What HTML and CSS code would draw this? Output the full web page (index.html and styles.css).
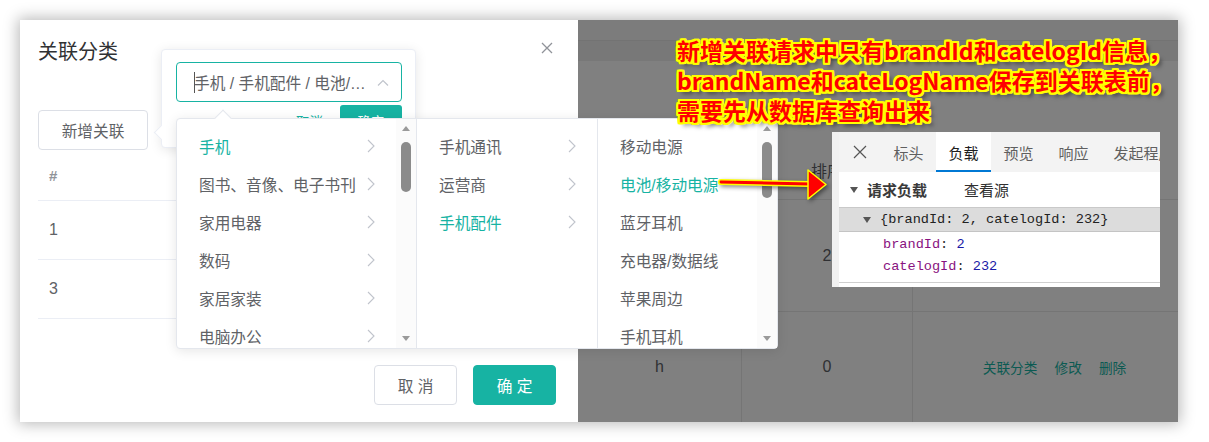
FILE: index.html
```html
<!DOCTYPE html>
<html lang="zh">
<head>
<meta charset="utf-8">
<title>关联分类</title>
<link rel="stylesheet" href="styles.css">
</head>
<body>
<div class="frame">
  <section class="dialog">
    <header class="dlg-head">
      <span class="dlg-title">关联分类</span>
      <svg class="dlg-close" viewBox="0 0 12 12" width="12" height="12"><path d="M1 1L11 11M11 1L1 11" stroke="#909399" stroke-width="1.3" fill="none"/></svg>
    </header>
    <div class="dlg-body">
      <button class="btn add-btn">新增关联</button>
      <div class="tbl">
        <div class="tr th">#</div>
        <div class="tr">1</div>
        <div class="tr">3</div>
      </div>
    </div>
    <footer class="dlg-foot">
      <button class="btn foot-btn">取 消</button>
      <button class="btn foot-btn btn-primary">确 定</button>
    </footer>
  </section>

  <section class="page">
    <div class="page-top"></div>
    <div class="page-sub"></div>
    <div class="ptable">
      <div class="prow phead">
        <div class="pc c1"></div><div class="pc c2">排序</div><div class="pc c3">操作</div>
      </div>
      <div class="prow p1">
        <div class="pc c1"></div><div class="pc c2">2</div><div class="pc c3"></div>
      </div>
      <div class="prow p2">
        <div class="pc c1">h</div><div class="pc c2">0</div>
        <div class="pc c3 links"><span>关联分类</span><span>修改</span><span>删除</span></div>
      </div>
    </div>
  </section>

  <div class="popover">
    <div class="cinput">
      <span class="caret"></span>
      <span class="cval">手机 / 手机配件 / 电池/…</span>
      <svg class="cup" viewBox="0 0 12 7" width="12" height="7"><path d="M1 6.5L6 1.5L11 6.5" stroke="#c0c4cc" stroke-width="1.2" fill="none"/></svg>
    </div>
    <div class="pop-actions">
      <span class="pop-cancel">取消</span>
      <span class="pop-ok">确定</span>
    </div>
  </div>

  <div class="cascader">
    <div class="menu m1">
      <div class="list">
        <div class="item active">手机<svg class="chev" viewBox="0 0 8 14"><path d="M1 1L7 7L1 13" stroke="#c0c4cc" stroke-width="1.1" fill="none"/></svg></div>
        <div class="item">图书、音像、电子书刊<svg class="chev" viewBox="0 0 8 14"><path d="M1 1L7 7L1 13" stroke="#c0c4cc" stroke-width="1.1" fill="none"/></svg></div>
        <div class="item">家用电器<svg class="chev" viewBox="0 0 8 14"><path d="M1 1L7 7L1 13" stroke="#c0c4cc" stroke-width="1.1" fill="none"/></svg></div>
        <div class="item">数码<svg class="chev" viewBox="0 0 8 14"><path d="M1 1L7 7L1 13" stroke="#c0c4cc" stroke-width="1.1" fill="none"/></svg></div>
        <div class="item">家居家装<svg class="chev" viewBox="0 0 8 14"><path d="M1 1L7 7L1 13" stroke="#c0c4cc" stroke-width="1.1" fill="none"/></svg></div>
        <div class="item">电脑办公<svg class="chev" viewBox="0 0 8 14"><path d="M1 1L7 7L1 13" stroke="#c0c4cc" stroke-width="1.1" fill="none"/></svg></div>
      </div>
      <div class="sbar"><span class="tri-up"></span><span class="thumb t1"></span><span class="tri-down"></span></div>
    </div>
    <div class="menu m2">
      <div class="list">
        <div class="item">手机通讯<svg class="chev" viewBox="0 0 8 14"><path d="M1 1L7 7L1 13" stroke="#c0c4cc" stroke-width="1.1" fill="none"/></svg></div>
        <div class="item">运营商<svg class="chev" viewBox="0 0 8 14"><path d="M1 1L7 7L1 13" stroke="#c0c4cc" stroke-width="1.1" fill="none"/></svg></div>
        <div class="item active">手机配件<svg class="chev" viewBox="0 0 8 14"><path d="M1 1L7 7L1 13" stroke="#c0c4cc" stroke-width="1.1" fill="none"/></svg></div>
      </div>
    </div>
    <div class="menu m3">
      <div class="list">
        <div class="item">移动电源</div>
        <div class="item active">电池/移动电源</div>
        <div class="item">蓝牙耳机</div>
        <div class="item">充电器/数据线</div>
        <div class="item">苹果周边</div>
        <div class="item">手机耳机</div>
      </div>
      <div class="sbar"><span class="tri-up"></span><span class="thumb t3"></span><span class="tri-down"></span></div>
    </div>
  </div>

  <div class="devtools">
    <div class="dt-body">
      <div class="dt-tabs">
        <svg class="dt-x" viewBox="0 0 14 14" width="14" height="14"><path d="M1 1L13 13M13 1L1 13" stroke="#555" stroke-width="1.2" fill="none"/></svg>
        <span class="dt-tab">标头</span>
        <span class="dt-tab on">负载</span>
        <span class="dt-tab">预览</span>
        <span class="dt-tab">响应</span>
        <span class="dt-tab">发起程序</span>
      </div>
      <div class="dt-sec"><span class="dt-tri"></span><b>请求负载</b><span class="dt-src">查看源</span></div>
      <div class="dt-obj"><span class="dt-tri"></span>{brandId: 2, catelogId: 232}</div>
      <div class="dt-kvs">
        <div class="dt-kv"><span class="k">brandId</span>: <span class="v">2</span></div>
        <div class="dt-kv"><span class="k">catelogId</span>: <span class="v">232</span></div>
      </div>
    </div>
  </div>

  <div class="note">
    <div>新增关联请求中只有brandId和catelogId信息，</div>
    <div>brandName和cateLogName保存到关联表前，</div>
    <div>需要先从数据库查询出来</div>
  </div>

  <svg class="arrow" viewBox="0 0 114 36" width="114" height="36">
    <path d="M3 14L92 16" stroke="#ffff00" stroke-width="6" stroke-linecap="round" fill="none"/>
    <path d="M3 14L92 16" stroke="#ff0000" stroke-width="3" stroke-linecap="round" fill="none"/>
    <path d="M90 2L108 16.5L90 31Z" fill="#ff0000" stroke="#ffff00" stroke-width="1.5" stroke-linejoin="round"/>
  </svg>
</div>
</body>
</html>
```

FILE: styles.css
```css
html, body {
  margin: 0;
  padding: 0;
  background: #fff;
}
body {
  font-family: "Liberation Sans", "Noto Sans CJK SC", sans-serif;
  color: #606266;
}
.frame {
  position: relative;
  width: 1158px;
  height: 402px;
  margin: 20px;
  display: flex;
  box-shadow: 0 0 14px 2px rgba(0, 0, 0, 0.28);
}

/* ---------- dialog ---------- */
.dialog {
  width: 558px;
  background: #fff;
  display: flex;
  flex-direction: column;
}
.dlg-head {
  display: flex;
  justify-content: space-between;
  align-items: flex-start;
  padding: 20px 25px 0 18px;
  height: 24px;
}
.dlg-title {
  font-size: 20px;
  line-height: 24px;
  color: #303133;
}
.dlg-close {
  margin-top: 2px;
}
.dlg-body {
  padding: 46px 18px 0;
}
.btn {
  font-family: "Liberation Sans", "Noto Sans CJK SC", sans-serif;
  font-size: 15.7px;
  color: #606266;
  background: #fff;
  border: 1px solid #dcdfe6;
  border-radius: 4px;
  padding: 0;
  box-sizing: border-box;
}
.add-btn {
  width: 110px;
  height: 40px;
  display: block;
}
.tbl {
  width: 100%;
}
.tr {
  height: 59px;
  box-sizing: border-box;
  border-bottom: 1px solid #ebeef5;
  display: flex;
  align-items: center;
  padding-left: 11px;
  font-size: 16px;
  color: #606266;
}
.tr.th {
  height: 51px;
  font-weight: bold;
  font-size: 15px;
  color: #909399;
}
.dlg-foot {
  margin-top: auto;
  display: flex;
  justify-content: flex-end;
  gap: 16px;
  padding: 0 22px 17px;
}
.foot-btn {
  width: 83px;
  height: 40px;
}
.btn-primary {
  background: #17b3a3;
  border-color: #17b3a3;
  color: #fff;
}

/* ---------- dimmed page behind ---------- */
.page {
  flex: 1;
  background: #808080;
  display: flex;
  flex-direction: column;
}
.page-top {
  height: 20px;
  background: #7c7c7c;
  border-bottom: 1px solid #737373;
}
.page-sub {
  height: 20px;
  background: #787878;
}
.ptable {
  margin-top: 79px;
  flex: 1;
  display: flex;
  flex-direction: column;
}
.prow {
  display: flex;
  border-bottom: 1px solid #757575;
  box-sizing: border-box;
}
.phead { height: 60px; }
.p1 { height: 112px; }
.p2 { flex: 1; border-bottom: none; }
.pc {
  display: flex;
  align-items: center;
  justify-content: center;
  border-right: 1px solid #757575;
  box-sizing: border-box;
  font-size: 16px;
  color: #2f3033;
}
.c1 { width: 164px; }
.c2 { width: 171px; }
.c3 { flex: 1; border-right: none; }
.links {
  gap: 17px;
  padding-left: 18px;
  font-size: 13.7px;
  color: #0c5a52;
}

/* ---------- popover ---------- */
.popover {
  position: absolute;
  left: 141px;
  top: 29px;
  width: 255px;
  height: 99px;
  box-sizing: border-box;
  background: #fff;
  border: 1px solid #ebeef5;
  border-radius: 4px;
  box-shadow: 0 2px 12px rgba(0, 0, 0, 0.1);
  padding: 12px 13px 0 14px;
}
.popover::before {
  content: "";
  position: absolute;
  left: -6px;
  top: 77px;
  width: 10px;
  height: 10px;
  background: #fff;
  border-left: 1px solid #ebeef5;
  border-bottom: 1px solid #ebeef5;
  transform: rotate(45deg);
}
.cinput {
  height: 40px;
  box-sizing: border-box;
  border: 1px solid #17b3a3;
  border-radius: 4px;
  display: flex;
  align-items: center;
  padding: 0 12px 0 17px;
}
.caret {
  width: 1px;
  height: 21px;
  background: #555;
  margin-right: -1px;
  flex: none;
}
.cval {
  flex: 1;
  font-size: 15.7px;
  color: #606266;
  white-space: nowrap;
  overflow: hidden;
}
.cup { flex: none; }
.pop-actions {
  display: flex;
  justify-content: flex-end;
  align-items: center;
  gap: 17px;
  margin-top: 3px;
}
.pop-cancel {
  font-size: 13.5px;
  color: #17b3a3;
}
.pop-ok {
  width: 62px;
  height: 32px;
  border-radius: 3px;
  background: #17b3a3;
  color: #fff;
  font-size: 13.5px;
  display: flex;
  align-items: center;
  justify-content: center;
}

/* ---------- cascader ---------- */
.cascader {
  position: absolute;
  left: 156px;
  top: 98px;
  width: 602px;
  height: 231px;
  box-sizing: border-box;
  background: #fff;
  border: 1px solid #e4e7ed;
  border-radius: 4px;
  box-shadow: 0 2px 12px rgba(0, 0, 0, 0.1);
  display: flex;
}
.cascader::before {
  content: "";
  position: absolute;
  left: 40px;
  top: -7px;
  width: 11px;
  height: 11px;
  background: #fff;
  border-left: 1px solid #e4e7ed;
  border-top: 1px solid #e4e7ed;
  transform: rotate(45deg);
}
.menu {
  display: flex;
  height: 100%;
  overflow: hidden;
  box-sizing: border-box;
  border-right: 1px solid #e4e7ed;
}
.m1 { width: 240px; }
.m2 { width: 181px; }
.m3 { flex: 1; border-right: none; }
.list {
  flex: 1;
  padding-top: 8px;
  min-width: 0;
}
.item {
  height: 38px;
  display: flex;
  align-items: center;
  padding: 0 21px 0 22px;
  font-size: 15.7px;
  color: #606266;
  white-space: nowrap;
}
.item.active { color: #17b3a3; }
.chev {
  margin-left: auto;
  width: 8px;
  height: 14px;
  flex: none;
}
.sbar {
  width: 20px;
  flex: none;
  background: #fbfbfb;
  display: flex;
  flex-direction: column;
  align-items: center;
  padding: 7px 0;
  box-sizing: border-box;
}
.tri-up {
  width: 0;
  height: 0;
  border-left: 4.5px solid transparent;
  border-right: 4.5px solid transparent;
  border-bottom: 5px solid #9a9a9a;
}
.tri-down {
  margin-top: auto;
  width: 0;
  height: 0;
  border-left: 4.5px solid transparent;
  border-right: 4.5px solid transparent;
  border-top: 5px solid #9a9a9a;
}
.thumb {
  width: 10px;
  border-radius: 5px;
  background: #8b8b8b;
  margin-top: 11px;
}
.t1 { height: 50px; }
.t3 { height: 56px; }

/* ---------- devtools snippet ---------- */
.devtools {
  position: absolute;
  left: 812px;
  top: 112px;
  width: 328px;
  height: 155px;
  box-sizing: border-box;
  padding-left: 7px;
  background: #f1f1f1;
  font-family: "Noto Sans CJK SC", sans-serif;
  color: #303030;
}
.dt-body {
  height: 100%;
  background: #fff;
  overflow: hidden;
}
.dt-tabs {
  height: 40px;
  background: #f3f3f3;
  display: flex;
  align-items: stretch;
  white-space: nowrap;
}
.dt-x {
  align-self: center;
  margin: 0 14px;
  flex: none;
}
.dt-tab {
  padding: 0 12.5px;
  font-size: 15px;
  display: flex;
  align-items: center;
  color: #5f5f5f;
  flex: none;
}
.dt-tab.on {
  background: #fff;
  color: #1f1f1f;
  box-shadow: inset 0 -2px 0 #0078d4;
}
.dt-sec {
  height: 35px;
  display: flex;
  align-items: center;
  padding-left: 11px;
  border-bottom: 1px solid #c9c9c9;
  font-size: 15px;
}
.dt-sec b { font-weight: bold; color: #3a3a3a; }
.dt-src { margin-left: 37px; }
.dt-tri {
  width: 0;
  height: 0;
  border-left: 4.5px solid transparent;
  border-right: 4.5px solid transparent;
  border-top: 6px solid #555;
  margin-right: 9px;
}
.dt-obj {
  height: 23px;
  background: #dcdcdc;
  border-bottom: 1px solid #c4c4c4;
  display: flex;
  align-items: center;
  padding-left: 24px;
  font-family: "Liberation Mono", monospace;
  font-size: 13.6px;
  color: #222;
  white-space: nowrap;
}
.dt-kvs {
  padding: 2px 0 4px;
  border-bottom: 1px solid #cfcfcf;
}
.dt-kv {
  height: 22px;
  line-height: 22px;
  padding-left: 44px;
  font-family: "Liberation Mono", monospace;
  font-size: 13.6px;
  color: #303030;
}
.k { color: #881280; }
.v { color: #1a1aa6; }

/* ---------- annotation ---------- */
.note {
  position: absolute;
  left: 657px;
  top: 15px;
  font-family: "Noto Sans CJK SC", sans-serif;
  font-weight: bold;
  font-size: 23px;
  line-height: 30px;
  color: #ff0000;
  white-space: nowrap;
  text-shadow:
    -2px -2px 0 #ffff00, 0 -2px 0 #ffff00, 2px -2px 0 #ffff00,
    2px 0 0 #ffff00, 2px 2px 0 #ffff00, 0 2px 0 #ffff00,
    -2px 2px 0 #ffff00, -2px 0 0 #ffff00,
    -1px -2px 0 #ffff00, 1px -2px 0 #ffff00, -1px 2px 0 #ffff00, 1px 2px 0 #ffff00,
    -2px -1px 0 #ffff00, -2px 1px 0 #ffff00, 2px -1px 0 #ffff00, 2px 1px 0 #ffff00,
    4px 4px 4px rgba(0, 0, 0, 0.55);
}
.arrow {
  position: absolute;
  left: 698px;
  top: 148px;
  filter: drop-shadow(2px 2px 2px rgba(0, 0, 0, 0.45));
}
```
